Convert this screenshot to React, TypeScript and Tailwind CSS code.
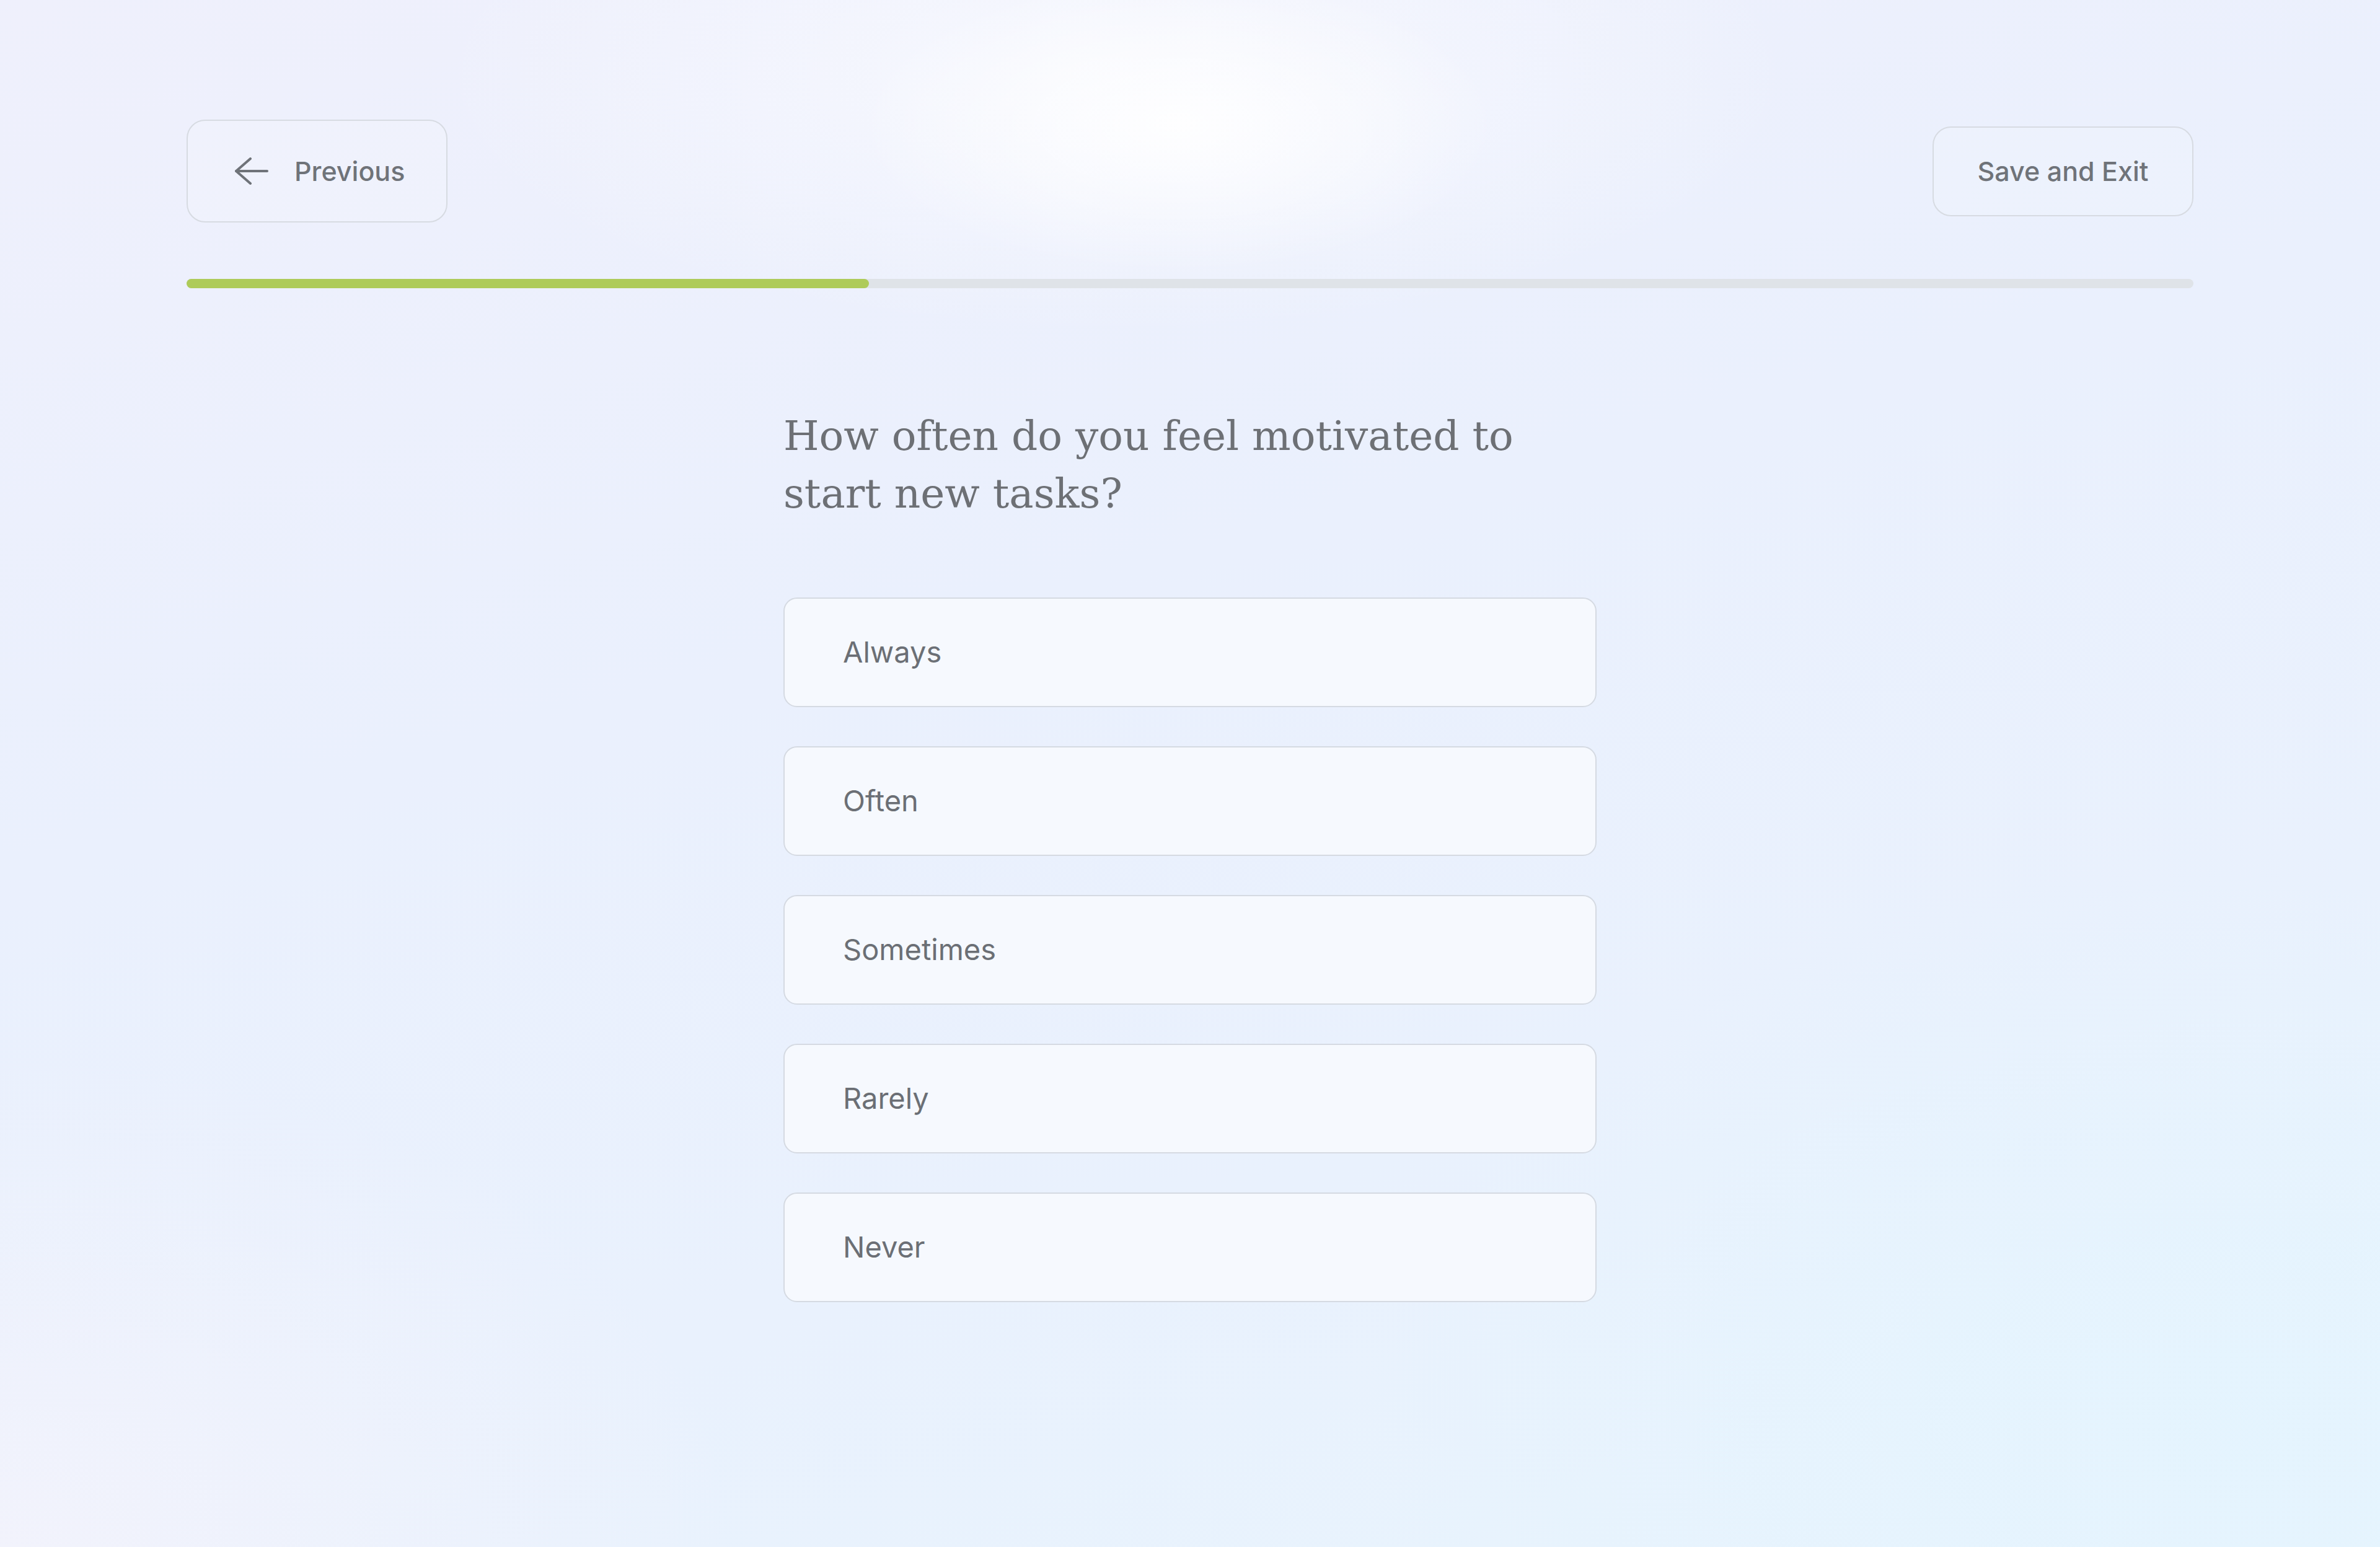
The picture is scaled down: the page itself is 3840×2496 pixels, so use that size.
import React from "react";

const options = ["Always", "Often", "Sometimes", "Rarely", "Never"];

function ArrowLeftIcon() {
  return (
    <svg width="54" height="44" viewBox="0 0 54 44" fill="none" stroke="#6f7379" strokeWidth="4" strokeLinecap="round" strokeLinejoin="round">
      <path d="M2 22H52" />
      <path d="M25 2L2 22L25 42" />
    </svg>
  );
}

export default function App() {
  return (
    <div className="min-h-screen w-full font-['Inter',sans-serif] text-[#6f7379] bg-[radial-gradient(ellipse_520px_240px_at_1900px_200px,rgba(255,255,255,0.9),rgba(255,255,255,0)),radial-gradient(ellipse_1100px_420px_at_1800px_120px,rgba(250,251,255,0.8),rgba(250,251,255,0)),radial-gradient(ellipse_1400px_900px_at_3600px_2300px,rgba(228,244,254,0.9),rgba(228,244,254,0)),radial-gradient(ellipse_1200px_800px_at_0px_2496px,rgba(243,243,252,0.9),rgba(243,243,252,0)),linear-gradient(165deg,#eff0fc_0%,#eaf0fd_40%,#e9f1fd_70%,#e8f4fd_100%)]">
      <div className="px-[301px] pt-[193px] pb-[200px]">
        <header className="flex items-center justify-between">
          <button className="flex h-[166px] w-[421px] items-center gap-[42px] rounded-[30px] border-2 border-[#d7dbe2] bg-white/10 pl-[76px] text-[43px] font-medium text-[#6f7379]">
            <ArrowLeftIcon />
            <span>Previous</span>
          </button>
          <button className="flex h-[145px] w-[421px] items-center justify-center rounded-[30px] border-2 border-[#d7dbe2] bg-white/10 text-[43px] font-medium text-[#6f7379]">
            Save and Exit
          </button>
        </header>

        <div className="mt-[91px] h-[15px] w-full rounded-full bg-[#dfe3e8]">
          <div className="h-full w-[34%] rounded-full bg-[#aecb59]" />
        </div>

        <main className="mx-auto mt-[192px] w-[1312px]">
          <h1 className="font-['DejaVu_Serif',serif] text-[66px] leading-[93px] font-normal text-[#6d7075]">
            How often do you feel motivated to start new tasks?
          </h1>
          <div className="mt-[121px] flex flex-col gap-[63px]">
            {options.map((o) => (
              <button
                key={o}
                className="flex h-[177px] w-full items-center rounded-[22px] border-2 border-[#d5dae2] bg-[#f7f9fe]/90 pl-[94px] text-left text-[47px] font-normal text-[#6b6f75]"
              >
                {o}
              </button>
            ))}
          </div>
        </main>
      </div>
    </div>
  );
}
